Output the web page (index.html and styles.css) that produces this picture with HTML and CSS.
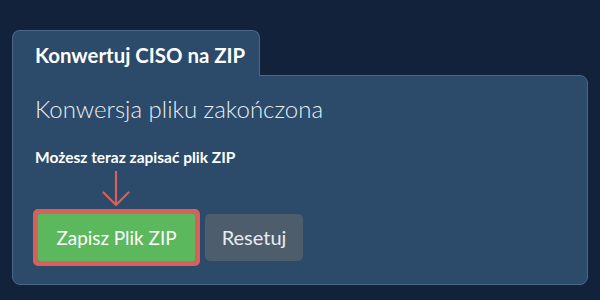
FILE: index.html
```html
<!DOCTYPE html>
<html lang="pl">
<head>
<meta charset="utf-8">
<title>Konwertuj CISO na ZIP</title>
<link rel="stylesheet" href="styles.css">
</head>
<body>
<div class="widget">
  <div class="tab">Konwertuj CISO na ZIP</div>
  <div class="panel">
    <div class="status">Konwersja pliku zakończona</div>
    <div class="hint">Możesz teraz zapisać plik ZIP</div>
    <svg class="arrow" width="30" height="36" viewBox="0 0 30 36" aria-hidden="true">
      <path d="M15 0 V34 M2.5 21.5 L15 34 L27.5 21.5" fill="none" stroke="#d9605a" stroke-width="2.2" stroke-linecap="round" stroke-linejoin="round"/>
    </svg>
    <div class="actions">
      <div class="highlight"><button class="btn btn-save">Zapisz Plik ZIP</button></div>
      <button class="btn btn-reset">Resetuj</button>
    </div>
  </div>
</div>
</body>
</html>
```

FILE: styles.css
```css
html, body {
  margin: 0;
  padding: 0;
  background: #11223a;
  width: 600px;
  height: 300px;
  overflow: hidden;
  font-family: Lato, "Open Sans", "Liberation Sans", sans-serif;
}

.widget {
  padding: 30px 12px 0 12px;
  display: flex;
  flex-direction: column;
  align-items: flex-start;
}

.tab {
  position: relative;
  z-index: 1;
  box-sizing: border-box;
  width: 248px;
  padding: 12px 0 9px 22px;
  margin-bottom: -1px;
  background: #2c4a6a;
  border: 1px solid #4b6786;
  border-bottom: none;
  border-radius: 8px 8px 0 0;
  color: #ffffff;
  font-weight: 700;
  font-size: 20.4px;
  line-height: 24px;
  white-space: nowrap;
}

.panel {
  align-self: stretch;
  background: #2c4a6a;
  border: 1px solid #4b6786;
  border-radius: 0 8px 8px 8px;
  padding: 18.6px 22px 18px 22px;
  display: flex;
  flex-direction: column;
  align-items: flex-start;
}

.status {
  color: #e8edf2;
  font-weight: 300;
  font-size: 24px;
  line-height: 28.8px;
  white-space: nowrap;
}

.hint {
  margin-top: 24.3px;
  color: #ffffff;
  font-weight: 700;
  font-size: 15.5px;
  line-height: 18.6px;
  white-space: nowrap;
}

.arrow {
  display: block;
  margin-top: 4.7px;
  margin-left: 66px;
}

.actions {
  margin-top: 2px;
  display: flex;
  align-items: center;
}

.highlight {
  margin-left: -2px;
  border: 5px solid #d9605a;
  border-radius: 5px;
  display: flex;
}

.btn {
  height: 47px;
  border: none;
  font-family: Lato, "Open Sans", "Liberation Sans", sans-serif;
  font-weight: 400;
  line-height: 47px;
  padding: 0;
  margin: 0;
  white-space: nowrap;
}

.btn-save {
  background: #5cb85c;
  color: #ffffff;
  border-radius: 1px;
  width: 157px;
  font-size: 18.9px;
}

.btn-reset {
  margin-left: 5px;
  background: #4e5d6c;
  color: #e8ecf0;
  border-radius: 5px;
  width: 98px;
  font-size: 20px;
}
```
